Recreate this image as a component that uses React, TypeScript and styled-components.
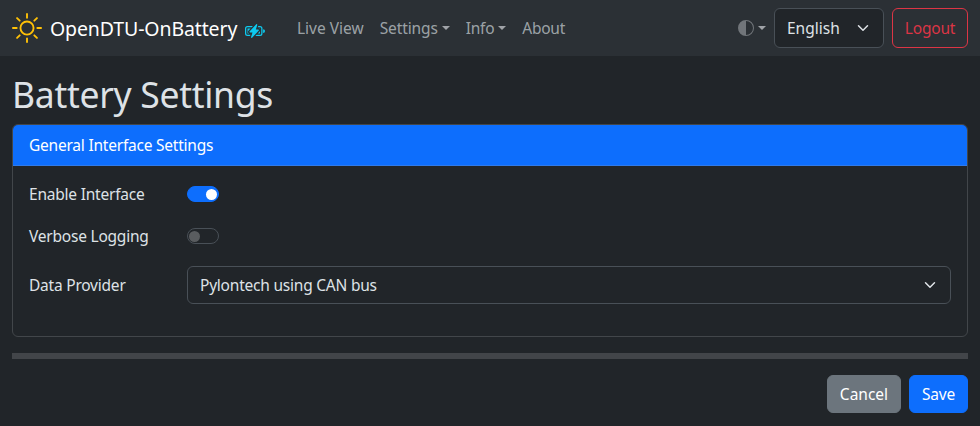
import React from "react";
import styled, { createGlobalStyle } from "styled-components";
import { BsSun, BsBatteryCharging, BsCircleHalf } from "react-icons/bs";

const GlobalStyle = createGlobalStyle`
  *, *::before, *::after { box-sizing: border-box; }
  body {
    margin: 0;
    background: #212529;
    color: #dee2e6;
    font-family: "Noto Sans", sans-serif;
    font-size: 15.5px;
    font-weight: 400;
    line-height: 24px;
    letter-spacing: -0.22px;
  }
`;

const Navbar = styled.nav`
  display: flex;
  align-items: center;
  height: 56px;
  padding: 8px 12px;
  background: #2b3035;
`;

const Brand = styled.a`
  display: flex;
  align-items: center;
  width: 277px;
  color: #fff;
  font-size: 19.5px;
  letter-spacing: -0.12px;
  line-height: 30px;
  white-space: nowrap;
`;

const BrandName = styled.span`
  padding-top: 2px;
`;

const SunIcon = styled(BsSun)`
  width: 30px;
  height: 30px;
  margin-right: 8px;
  color: #ffc107;
`;

const BatteryIcon = styled(BsBatteryCharging)`
  width: 20px;
  height: 20px;
  margin: 5px 0 0 8px;
  color: #0dcaf0;
`;

const NavLinks = styled.div`
  display: flex;
  flex: 1;
`;

const NavLink = styled.a<{ $track?: number; $caret?: boolean }>`
  padding: 8px;
  color: rgba(222, 226, 230, 0.65);
  letter-spacing: ${(p) => p.$track ?? 0}px;
  white-space: nowrap;
  &::after {
    content: "";
    display: ${(p) => (p.$caret ? "inline-block" : "none")};
    margin-left: 4px;
    vertical-align: 4px;
    border-top: 4.8px solid;
    border-right: 4.8px solid transparent;
    border-left: 4.8px solid transparent;
  }
`;

const ThemeLink = styled(NavLink)`
  display: flex;
  align-items: center;
`;

const ThemeIcon = styled(BsCircleHalf)`
  width: 16px;
  height: 16px;
  opacity: 0.6;
`;

const Select = styled.button<{ $width?: number; $height: number }>`
  display: flex;
  align-items: center;
  justify-content: space-between;
  width: ${(p) => (p.$width ? `${p.$width}px` : "100%")};
  height: ${(p) => p.$height}px;
  padding: 0 14px 0 12px;
  border: 1px solid #495057;
  border-radius: 6px;
  background: #212529;
  color: #dee2e6;
  font: inherit;
  letter-spacing: ${(p) => (p.$width ? 0 : -0.22)}px;
`;

const ChevronIcon = styled.svg`
  width: 12px;
  height: 12px;
  fill: none;
  stroke: #dee2e6;
  stroke-width: 2;
  stroke-linecap: round;
  stroke-linejoin: round;
`;

const Chevron = () => (
  <ChevronIcon viewBox="0 0 16 16">
    <path d="m2 5 6 6 6-6" />
  </ChevronIcon>
);

type Kind = "danger" | "secondary" | "primary";
const kindColor: Record<Kind, string> = {
  danger: "#dc3545",
  secondary: "#6c757d",
  primary: "#0d6efd",
};

const Button = styled.button<{ $kind: Kind; $width: number }>`
  width: ${(p) => p.$width}px;
  height: ${(p) => (p.$kind === "danger" ? 40 : 38)}px;
  padding: 0;
  border: 1px solid ${(p) => kindColor[p.$kind]};
  border-radius: 6px;
  background: ${(p) => (p.$kind === "danger" ? "transparent" : kindColor[p.$kind])};
  color: ${(p) => (p.$kind === "danger" ? kindColor.danger : "#fff")};
  font: inherit;
  letter-spacing: ${(p) => (p.$kind === "secondary" ? 0 : -0.2)}px;
`;

const NavTools = styled.div`
  display: flex;
  align-items: center;
  gap: 8px;
  ${ThemeLink} { margin-right: -8px; }
`;

const Page = styled.main`
  padding: 16px 12px 0;
`;

const Title = styled.h1`
  margin: 0 0 8px;
  font-size: 35.5px;
  font-weight: 400;
  line-height: 44px;
  letter-spacing: -0.3px;
`;

const Card = styled.section`
  height: 213px;
  border: 1px solid #42464a;
  border-radius: 6px;
  overflow: hidden;
`;

const CardHeader = styled.header`
  height: 41px;
  padding: 8px 16px;
  background: #0d6efd;
  border-bottom: 1px solid #307bea;
  color: #fff;
`;

const CardBody = styled.div`
  padding: 15px 16px;
`;

const FormRow = styled.div<{ $height: number }>`
  display: grid;
  grid-template-columns: 158px 1fr;
  align-items: center;
  height: ${(p) => p.$height}px;
  margin-bottom: 16px;
  &:last-child { margin-top: 17px; }
`;

const Switch = styled.span<{ $on?: boolean }>`
  display: flex;
  align-items: center;
  justify-content: ${(p) => (p.$on ? "flex-end" : "flex-start")};
  width: 32px;
  height: 16px;
  padding: 0 1px;
  border: 1px solid ${(p) => (p.$on ? "#0d6efd" : "#495057")};
  border-radius: 8px;
  background: ${(p) => (p.$on ? "#0d6efd" : "#212529")};
  &::before {
    content: "";
    width: 11px;
    height: 11px;
    border-radius: 50%;
    background: ${(p) => (p.$on ? "#fff" : "#595c5f")};
  }
`;

const Divider = styled.hr`
  height: 6px;
  margin: 16px 0;
  border: 0;
  background: #424549;
`;

const Actions = styled.div`
  display: flex;
  justify-content: flex-end;
  gap: 8px;
`;

export default function App() {
  return (
    <>
      <GlobalStyle />
      <Navbar>
        <Brand>
          <SunIcon />
          <BrandName>OpenDTU-OnBattery</BrandName>
          <BatteryIcon />
        </Brand>
        <NavLinks>
          <NavLink>Live View</NavLink>
          <NavLink $caret $track={-0.12}>Settings</NavLink>
          <NavLink $caret $track={-0.25}>Info</NavLink>
          <NavLink $track={-0.25}>About</NavLink>
        </NavLinks>
        <NavTools>
          <ThemeLink $caret>
            <ThemeIcon />
          </ThemeLink>
          <Select $width={110} $height={40}>
            English
            <Chevron />
          </Select>
          <Button $kind="danger" $width={76}>Logout</Button>
        </NavTools>
      </Navbar>
      <Page>
        <Title>Battery Settings</Title>
        <Card>
          <CardHeader>General Interface Settings</CardHeader>
          <CardBody>
            <FormRow $height={26}>
              Enable Interface
              <Switch $on />
            </FormRow>
            <FormRow $height={26}>
              Verbose Logging
              <Switch />
            </FormRow>
            <FormRow $height={38}>
              Data Provider
              <Select $height={38}>
                Pylontech using CAN bus
                <Chevron />
              </Select>
            </FormRow>
          </CardBody>
        </Card>
        <Divider />
        <Actions>
          <Button $kind="secondary" $width={74}>Cancel</Button>
          <Button $kind="primary" $width={59}>Save</Button>
        </Actions>
      </Page>
    </>
  );
}
